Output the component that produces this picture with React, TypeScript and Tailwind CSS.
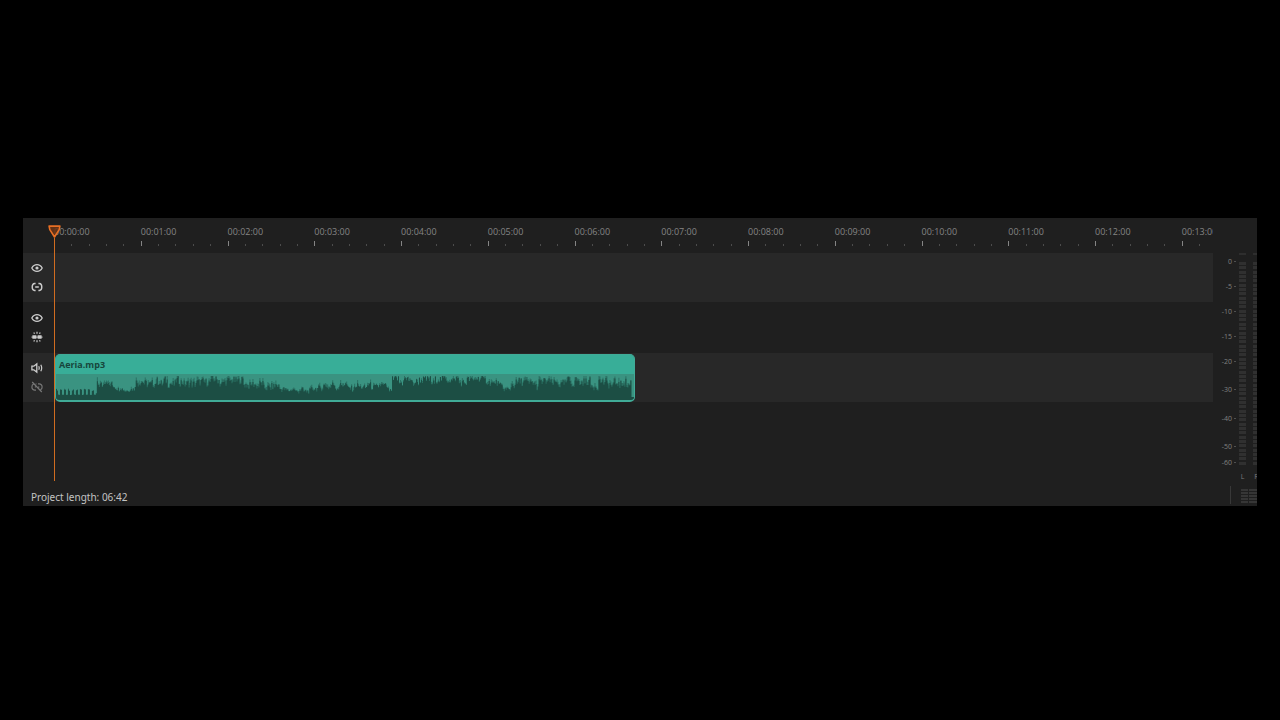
import { useState, type ReactNode } from "react";
import clsx from "clsx";

const VISIBLE_MINUTES = 13.36;
const CLIP_MINUTES = 6.69;

const minutes = Array.from({ length: 14 }, (_, i) => i);

const scale = [
  { label: "0", height: "h-[25px]" },
  { label: "-5", height: "h-[25px]" },
  { label: "-10", height: "h-[25px]" },
  { label: "-15", height: "h-[25px]" },
  { label: "-20", height: "h-[28px]" },
  { label: "-30", height: "h-[29px]" },
  { label: "-40", height: "h-[28px]" },
  { label: "-50", height: "h-[16px]" },
  { label: "-60", height: "h-[9px]" },
];

// x, peak height and jitter of the loudness curve
const envelope = [
  [0, 7, 2], [40, 7, 2], [41, 18, 8], [57, 18, 8], [60, 13, 4], [69, 10, 4], [78, 12, 5],
  [79, 19, 9], [100, 19, 9], [130, 19, 9], [160, 19, 8], [190, 18, 8], [205, 15, 7],
  [220, 14, 7], [233, 9, 4], [245, 10, 5], [260, 12, 6], [280, 14, 7], [310, 14, 6],
  [330, 14, 5], [336, 10, 4], [337, 20, 8], [360, 19, 8], [400, 20, 7], [432, 20, 7],
  [442, 16, 6], [455, 10, 4], [456, 18, 9], [480, 17, 8], [520, 18, 8], [550, 17, 9],
  [576, 18, 9], [577, 3, 0], [580, 3, 0],
];

function noise(n: number) {
  const v = Math.sin(n * 12.9898) * 43758.5453;
  return v - Math.floor(v);
}

function level(x: number) {
  const next = Math.max(1, envelope.findIndex((p) => p[0] >= x));
  const [x0, y0, j0] = envelope[next - 1];
  const [x1, y1, j1] = envelope[next];
  const t = (x - x0) / (x1 - x0);
  return { peak: y0 + (y1 - y0) * t, jitter: j0 + (j1 - j0) * t };
}

function wavePath(soft: boolean) {
  let d = "M0 26";
  for (let x = 0; x < 580; x++) {
    const { peak, jitter } = level(x);
    let h = peak + (noise(x) - 0.6) * jitter + (noise(Math.floor(x / 4) + 50) - 0.5) * jitter * 0.7;
    if (x < 40) h = x % 4 < 2 ? 11 - noise(x) * 2 : 5;
    if (soft) h += noise(x + 900) * jitter * 0.5;
    d += `V${(26 - Math.min(h, 24)).toFixed(1)}H${x + 1}`;
  }
  return d + "V26Z";
}

function EyeIcon() {
  return (
    <svg viewBox="0 0 12 12" className="size-3" fill="none" stroke="currentColor" strokeWidth="1.3">
      <path d="M0.8 6C2 3.7 3.8 2.6 6 2.6S10 3.7 11.2 6C10 8.3 8.2 9.4 6 9.4S2 8.3 0.8 6Z" />
      <circle cx="6" cy="6" r="1.6" fill="currentColor" stroke="none" />
    </svg>
  );
}

function LinkIcon() {
  return (
    <svg viewBox="0 0 12 12" className="size-3" fill="none" stroke="currentColor" strokeWidth="1.4">
      <path d="M4.6 2.5H3.6Q1.2 2.7 1.2 6T3.6 9.5H4.6M7.4 2.5H8.4Q10.8 2.7 10.8 6T8.4 9.5H7.4M4.2 6H7.8" />
    </svg>
  );
}

function UnlinkIcon() {
  return (
    <svg viewBox="0 0 12 12" className="size-3" fill="none" stroke="currentColor" strokeWidth="1.2">
      <path d="M2.9 2.8A3.2 3.2 0 0 0 0.9 6 3 3 0 0 0 4 9.2H5M5.4 2.8H4.7M7 2.8H8A3 3 0 0 1 11.1 6 3.2 3.2 0 0 1 9.6 8.8M7 6H8.4M3.8 6H5M1.2 1L10.8 11" />
    </svg>
  );
}

function SplitIcon() {
  return (
    <svg viewBox="0 0 12 12" className="size-3" fill="currentColor" stroke="currentColor">
      <path d="M1.4 4.3H5.4V7.8H1.4ZM6.6 4.3H10.6V7.8H6.6Z" stroke="none" />
      <path d="M0.4 6.1H11.6" strokeWidth="0.9" />
      <path d="M6 0.8V2.8M2.8 1.4L3.5 2.8M9.2 1.4L8.5 2.8M6 9.2V11.2M2.8 10.6L3.5 9.2M9.2 10.6L8.5 9.2" strokeWidth="1.2" />
    </svg>
  );
}

function SpeakerIcon() {
  return (
    <svg viewBox="0 0 12 12" className="size-3" fill="none" stroke="currentColor" strokeWidth="1.3">
      <path d="M0.9 4.2H2.8L5.8 1.9V10.1L2.8 7.8H0.9Z" />
      <path d="M7.7 4.2Q8.7 6 7.7 7.8M9.8 2.8Q11.6 6 9.8 9.2" strokeWidth="1.2" />
    </svg>
  );
}

function TrackButton({ label, dim, children }: { label: string; dim?: boolean; children: ReactNode }) {
  const [active, setActive] = useState(true);
  return (
    <button
      type="button"
      aria-label={label}
      aria-pressed={active}
      onClick={() => setActive(!active)}
      className={clsx("block size-3", dim ? "text-[#777777]" : "text-[#cccccc]")}
    >
      {children}
    </button>
  );
}

function Track({ className, controls, children }: { className: string; controls: ReactNode; children?: ReactNode }) {
  return (
    <div className={clsx("flex", className)}>
      <div className="flex w-[31px] shrink-0 flex-col justify-center gap-[7px] pl-2">{controls}</div>
      <div className="flex min-w-0 flex-1">{children}</div>
    </div>
  );
}

function Ruler() {
  return (
    <div className="flex h-[35px] overflow-hidden pl-[31px]">
      {minutes.map((m) => (
        <div key={m} className="shrink-0 pt-2" style={{ width: `${100 / VISIBLE_MINUTES}%` }}>
          <div className="text-[9px] leading-[11px] whitespace-nowrap text-[#858585]">
            {`00:${String(m).padStart(2, "0")}:00`}
          </div>
          <div className="mt-1 flex h-[5px] items-end">
            {[0, 1, 2, 3, 4].map((t) => (
              <div key={t} className="flex flex-1">
                <div className={clsx("w-px", t > 0 ? "h-[2px] bg-[#4c4c4c]" : m > 0 && "h-[5px] bg-[#858585]")} />
              </div>
            ))}
          </div>
        </div>
      ))}
    </div>
  );
}

function Clip() {
  return (
    <div
      className="mt-px ml-px flex flex-col overflow-hidden rounded-[5px] border border-b-2 border-[#40ab97] bg-[#3a9381]"
      style={{ width: `${(CLIP_MINUTES / VISIBLE_MINUTES) * 100}%` }}
    >
      <div className="h-[19px] bg-[#38ae98] pl-[3px] text-[9px] leading-[19px] font-bold text-[#17463c]">Aeria.mp3</div>
      <svg viewBox="0 0 580 26" preserveAspectRatio="none" className="block min-h-0 w-full flex-1">
        <path d={wavePath(true)} fill="#2a7163" />
        <path d={wavePath(false)} fill="#1c4e44" />
      </svg>
    </div>
  );
}

function Playhead() {
  return (
    <div className="pointer-events-none absolute top-[7px] bottom-[3px] left-[25px] flex w-[13px] flex-col items-center">
      <svg viewBox="0 0 13 13" className="size-[13px] shrink-0">
        <path d="M1.1 1.1H11.9L11.2 4.6L6.5 12L1.8 4.6Z" fill="#6e3514" fillOpacity="0.85" stroke="#e86f24" strokeWidth="1.6" strokeLinejoin="round" />
      </svg>
      <div className="w-px flex-1 bg-[#d06c20]" />
    </div>
  );
}

function MeterBar({ label }: { label: string }) {
  return (
    <div className="flex w-[7px] shrink-0 flex-col items-center">
      <div className="h-[2px] w-full bg-[#2e2e2e]" />
      <div className="mt-[7px] flex h-[203px] w-full flex-col justify-between">
        {Array.from({ length: 47 }, (_, i) => (
          <div key={i} className="h-[3px] bg-[#303030]" />
        ))}
      </div>
      <div className="mt-[7px] text-[7px] leading-[10px] text-[#7c7c7c]">{label}</div>
    </div>
  );
}

function LevelMeter() {
  return (
    <div className="flex w-11 shrink-0 overflow-hidden">
      <div className="w-[23px] shrink-0 pt-[39px] text-[7px] leading-[10px] text-[#808080]">
        {scale.map((s) => (
          <div key={s.label} className={clsx("flex items-start justify-end gap-[2px]", s.height)}>
            <span>{s.label}</span>
            <span className="mt-1 h-px w-[2px] bg-[#505050]" />
          </div>
        ))}
      </div>
      <div className="flex gap-[7px] pt-[35px] pl-[3px]">
        <MeterBar label="L" />
        <MeterBar label="R" />
      </div>
    </div>
  );
}

export default function App() {
  return (
    <main className="flex min-h-screen flex-col justify-center bg-black px-[23px] pt-1 font-['Open_Sans','Noto_Sans',sans-serif]">
      <section className="overflow-hidden bg-[#1f1f1f]">
        <div className="flex">
          <div className="relative min-w-0 flex-1 pb-[82px]">
            <Ruler />
            <Track
              className="h-[49px] bg-[#282828]"
              controls={
                <>
                  <TrackButton label="Show track 1"><EyeIcon /></TrackButton>
                  <TrackButton label="Link track 1"><LinkIcon /></TrackButton>
                </>
              }
            />
            <Track
              className="h-[51px]"
              controls={
                <>
                  <TrackButton label="Show track 2"><EyeIcon /></TrackButton>
                  <TrackButton label="Split track 2"><SplitIcon /></TrackButton>
                </>
              }
            />
            <Track
              className="h-[49px] bg-[#282828]"
              controls={
                <>
                  <TrackButton label="Mute track 3"><SpeakerIcon /></TrackButton>
                  <TrackButton label="Link track 3" dim><UnlinkIcon /></TrackButton>
                </>
              }
            >
              <Clip />
            </Track>
            <Playhead />
          </div>
          <LevelMeter />
        </div>

        <footer className="flex h-[22px] items-center justify-between pl-2">
          <p className="pt-1 font-['Noto_Sans','Open_Sans',sans-serif] text-[10px] leading-[14px] text-[#c4c4c4]">
            Project length: 06:42
          </p>
          <div className="flex h-[18px] border-l border-[#383838] pt-[3px] pl-[10px]">
            <div className="flex w-4 flex-col gap-px">
              {[0, 1, 2, 3, 4].map((row) => (
                <div key={row} className="flex gap-px">
                  <div className="h-[2px] w-[7px] bg-[#363636]" />
                  <div className="h-[2px] flex-1 bg-[#363636]" />
                </div>
              ))}
            </div>
          </div>
        </footer>
      </section>
    </main>
  );
}
